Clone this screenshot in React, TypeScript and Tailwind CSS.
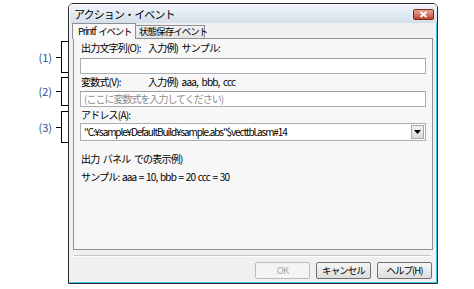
const font = { fontFamily: '"Noto Sans CJK JP", "Liberation Sans", sans-serif' };

function Callout({ label, height }: { label: string; height: number }) {
  return (
    <div className="flex items-center justify-end" style={{ height }}>
      <span className="text-[11px] leading-none text-[#2b4f8f] mr-[4px] whitespace-nowrap">{label}</span>
      <div className="w-[5px] h-px bg-black" />
      <div className="w-[7px] h-full border-l border-y border-black" />
    </div>
  );
}

function TextBox({ placeholder }: { placeholder?: string }) {
  return (
    <div className="h-[16px] bg-white border border-[#abadb3] border-t-[#9a9da5] flex items-center px-[3px] text-[10px] tracking-[-0.1em] leading-none text-[#8a8a8a] whitespace-nowrap">
      {placeholder}
    </div>
  );
}

function Button({ children, disabled }: { children: React.ReactNode; disabled?: boolean }) {
  return (
    <div
      className={
        'w-[55px] h-[17px] rounded-[2px] border flex items-center justify-center text-[9.5px] tracking-[-0.1em] leading-none whitespace-nowrap ' +
        (disabled
          ? 'border-[#b8bcc0] bg-[#f4f4f4] text-[#a6a6a6]'
          : 'border-[#707070] bg-gradient-to-b from-[#f6f6f6] to-[#dddddd] text-black')
      }
    >
      {children}
    </div>
  );
}

export default function App() {
  return (
    <div className="w-[474px] h-[289px] bg-white flex text-black" style={font}>
      {/* callouts */}
      <div className="w-[68px] flex flex-col">
        <div className="h-[41px]" />
        <Callout label="(1)" height={32} />
        <div className="h-[4px]" />
        <Callout label="(2)" height={29} />
        <div className="h-[5px]" />
        <Callout label="(3)" height={32} />
      </div>

      {/* dialog */}
      <div className="mt-[3px] w-[370px] h-[281px] border border-[#2a2a2a] rounded-t-[5px] flex flex-col overflow-hidden">
        <div className="h-[19px] shrink-0 flex items-center justify-between pl-[4px] pr-[3px] bg-gradient-to-b from-[#f0f4f9] to-[#d4dfeb] border-l border-t border-white">
          <span className="text-[11px] tracking-[-0.08em] leading-none text-black whitespace-nowrap">アクション・イベント</span>
          <div className="w-[21px] h-[11px] rounded-[2px] border border-[#7b2a20] bg-gradient-to-b from-[#e8a796] to-[#c2442f] flex items-center justify-center">
            <svg width="9" height="7" viewBox="0 0 9 7">
              <path d="M1.5 1 L7.5 6 M7.5 1 L1.5 6" stroke="white" strokeWidth="1.8" />
            </svg>
          </div>
        </div>

        <div className="flex-1 bg-[#f0f0f0] flex flex-col pl-[3px] pr-[3px] border-r border-b border-r-[#3fc3ea] border-b-[#3fc3ea]">
          {/* tabs */}
          <div className="h-[15px] flex items-end shrink-0">
            <div className="h-[16px] w-[64px] -mb-px relative z-10 bg-[#f7f7f7] border border-b-0 border-[#8e9098] flex items-center pl-[5px] text-[9.5px] tracking-[-0.13em] [word-spacing:2px] leading-none whitespace-nowrap">
              Printf イベント
            </div>
            <div className="h-[13px] w-[69px] bg-gradient-to-b from-[#f2f2f2] to-[#e3e3e3] border border-l-0 border-b-0 border-[#8e9098] flex items-center pl-[3px] text-[9.5px] tracking-[-0.1em] leading-none whitespace-nowrap">
              状態保存イベント
            </div>
          </div>

          {/* panel */}
          <div className="h-[212px] ml-[1px] w-[360px] border border-[#8e9098] bg-[#f7f7f7] px-[6px] pt-[3px] flex flex-col text-[10px] tracking-[-0.08em] [word-spacing:2px] leading-none whitespace-nowrap">
            <div className="h-[12px] flex items-center pl-[1px]">
              <span className="w-[67px]">出力文字列(O):</span>
              <span>入力例) サンプル:</span>
            </div>
            <div className="mt-[4px]">
              <TextBox />
            </div>
            <div className="mt-[2px] h-[12px] flex items-center pl-[1px]">
              <span className="w-[67px]">変数式(V):</span>
              <span>入力例) aaa, bbb, ccc</span>
            </div>
            <div className="mt-[3px]">
              <TextBox placeholder="(ここに変数式を入力してください)" />
            </div>
            <div className="mt-[2px] h-[12px] flex items-center pl-[1px]">アドレス(A):</div>
            <div className="mt-[2px] h-[18px] bg-white border border-[#abadb3] flex items-center justify-between pl-[3px] pr-px">
              <span className="text-[10px] tracking-[-0.11em]">"C:¥sample¥DefaultBuild¥sample.abs"$vecttbl.asm#14</span>
              <div className="w-[13px] h-[14px] border border-[#a7a7a7] bg-gradient-to-b from-[#f3f3f3] to-[#d9d9d9] flex items-center justify-center">
                <svg width="7" height="4" viewBox="0 0 7 4">
                  <path d="M0 0 H7 L3.5 4 Z" fill="black" />
                </svg>
              </div>
            </div>
            <div className="mt-[12px] h-[12px] flex items-center pl-[1px]">出力 パネル での表示例)</div>
            <div className="mt-[6px] h-[12px] flex items-center pl-[1px] [word-spacing:1px]">サンプル: aaa = 10, bbb = 20 ccc = 30</div>
          </div>

          {/* separator */}
          <div className="mt-[5px] mx-[2px] h-[2px] border-t border-[#c8c8c8] border-b border-b-white" />

          {/* buttons */}
          <div className="mt-[5px] flex justify-end gap-[6px] pr-[1px]">
            <Button disabled>OK</Button>
            <Button>キャンセル</Button>
            <Button>ヘルプ(H)</Button>
          </div>
        </div>
      </div>
    </div>
  );
}
